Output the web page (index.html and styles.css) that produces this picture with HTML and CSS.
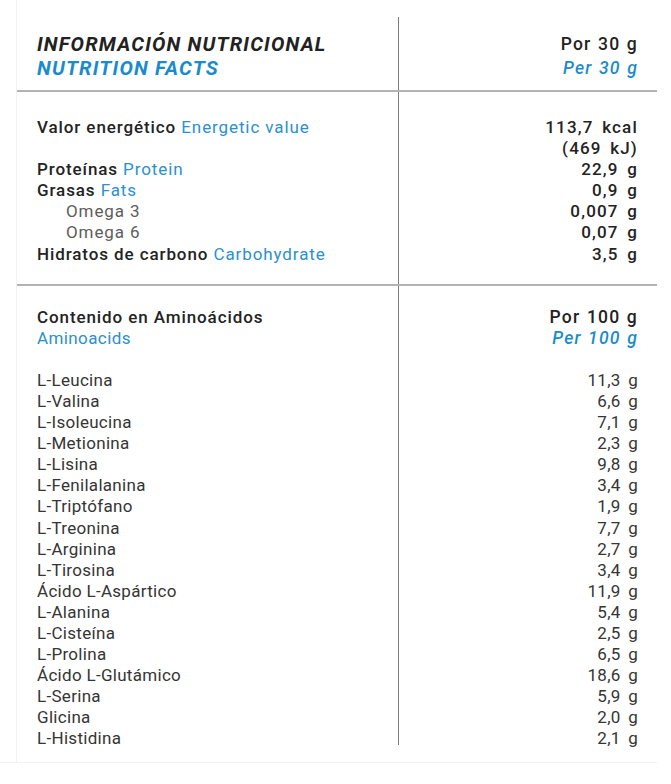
FILE: index.html
```html
<!DOCTYPE html>
<html lang="es">
<head>
<meta charset="utf-8">
<title>Información nutricional</title>
<link rel="stylesheet" href="styles.css">
</head>
<body>
<div class="frame">
  <div class="panel">
    <section class="sec sec-head">
      <div class="l">
        <div class="h-es">INFORMACIÓN NUTRICIONAL</div>
        <div class="h-en">NUTRITION FACTS</div>
      </div>
      <div class="r">
        <div class="por">Por 30 g</div>
        <div class="per">Per 30 g</div>
      </div>
    </section>
    <section class="sec sec-macro">
      <div class="l">
        <div class="row"><b>Valor energético</b> <span class="en">Energetic value</span></div>
        <div class="row">&nbsp;</div>
        <div class="row"><b>Proteínas</b> <span class="en">Protein</span></div>
        <div class="row"><b>Grasas</b> <span class="en">Fats</span></div>
        <div class="row sub">Omega 3</div>
        <div class="row sub">Omega 6</div>
        <div class="row"><b>Hidratos de carbono</b> <span class="en">Carbohydrate</span></div>
      </div>
      <div class="r bold">
        <div class="row">113,7 kcal</div>
        <div class="row">(469 kJ)</div>
        <div class="row">22,9 g</div>
        <div class="row">0,9 g</div>
        <div class="row">0,007 g</div>
        <div class="row">0,07 g</div>
        <div class="row">3,5 g</div>
      </div>
    </section>
    <section class="sec sec-amino">
      <div class="l">
        <div class="row title"><b>Contenido en Aminoácidos</b></div>
        <div class="row en amino-en">Aminoacids</div>
        <div class="list">
          <div class="row">L-Leucina</div>
          <div class="row">L-Valina</div>
          <div class="row">L-Isoleucina</div>
          <div class="row">L-Metionina</div>
          <div class="row">L-Lisina</div>
          <div class="row">L-Fenilalanina</div>
          <div class="row">L-Triptófano</div>
          <div class="row">L-Treonina</div>
          <div class="row">L-Arginina</div>
          <div class="row">L-Tirosina</div>
          <div class="row">Ácido L-Aspártico</div>
          <div class="row">L-Alanina</div>
          <div class="row">L-Cisteína</div>
          <div class="row">L-Prolina</div>
          <div class="row">Ácido L-Glutámico</div>
          <div class="row">L-Serina</div>
          <div class="row">Glicina</div>
          <div class="row">L-Histidina</div>
        </div>
      </div>
      <div class="r">
        <div class="row por">Por 100 g</div>
        <div class="row per">Per 100 g</div>
        <div class="list vals">
          <div class="row">11,3 g</div>
          <div class="row">6,6 g</div>
          <div class="row">7,1 g</div>
          <div class="row">2,3 g</div>
          <div class="row">9,8 g</div>
          <div class="row">3,4 g</div>
          <div class="row">1,9 g</div>
          <div class="row">7,7 g</div>
          <div class="row">2,7 g</div>
          <div class="row">3,4 g</div>
          <div class="row">11,9 g</div>
          <div class="row">5,4 g</div>
          <div class="row">2,5 g</div>
          <div class="row">6,5 g</div>
          <div class="row">18,6 g</div>
          <div class="row">5,9 g</div>
          <div class="row">2,0 g</div>
          <div class="row">2,1 g</div>
        </div>
      </div>
    </section>
  </div>
</div>
</body>
</html>
```

FILE: styles.css
```css
html, body {
  margin: 0;
  padding: 0;
  background: #ffffff;
}
body {
  font-family: Roboto, "Liberation Sans", sans-serif;
  color: #2b2b2b;
  font-size: 17px;
}
.frame {
  width: 657px;
  height: 763px;
  border-bottom: 1px solid #f1f1f1;
  box-sizing: border-box;
}
.panel {
  margin-left: 16px;
  width: 641px;
  height: 763px;
  border-left: 1px solid #f1f1f1;
  box-sizing: border-box;
  padding-top: 17px;
}
.sec {
  display: grid;
  grid-template-columns: 382px 1fr;
}
.sec + .sec {
  border-top: 2px solid #b3b3b3;
}
.l {
  padding-left: 20px;
  border-right: 1.5px solid #7d7d7d;
}
.r {
  padding-right: 19px;
  text-align: right;
}
.row {
  line-height: 21.1px;
  white-space: nowrap;
}
.sec-head .l, .sec-head .r {
  padding-top: 15px;
  padding-bottom: 10px;
}
.h-es, .h-en, .sec-head .por, .sec-head .per {
  line-height: 24px;
}
.h-es, .h-en {
  font-weight: 700;
  font-style: italic;
  font-size: 20px;
  letter-spacing: 1.2px;
}
.h-es {
  color: #222;
}
.h-en {
  color: #1a8bcc;
}
.por, .per {
  font-size: 17.5px;
  font-weight: 500;
  letter-spacing: 1.2px;
  word-spacing: 1px;
}
.por {
  color: #222;
}
.per {
  font-style: italic;
  color: #1a8bcc;
}
b {
  font-weight: 500;
  color: #232323;
}
.en {
  color: #2a90cf;
}
.sec-macro .l {
  letter-spacing: 0.9px;
}
.bold {
  font-weight: 500;
  color: #232323;
  letter-spacing: 1.2px;
  word-spacing: 3px;
}
.sub {
  padding-left: 29px;
  color: #5d5d5d;
  letter-spacing: 0.9px;
}
.sec-macro .l, .sec-macro .r {
  padding-top: 25px;
  padding-bottom: 19px;
}
.sec-amino .l {
  padding-top: 21px;
  padding-bottom: 0;
}
.sec-amino .r {
  padding-top: 21px;
}
.title {
  letter-spacing: 0.9px;
}
.amino-en {
  letter-spacing: 0.4px;
}
.list {
  margin-top: 21px;
  margin-bottom: -5px;
  color: #353535;
  letter-spacing: 0.3px;
}
.vals {
  word-spacing: 3px;
}
```
